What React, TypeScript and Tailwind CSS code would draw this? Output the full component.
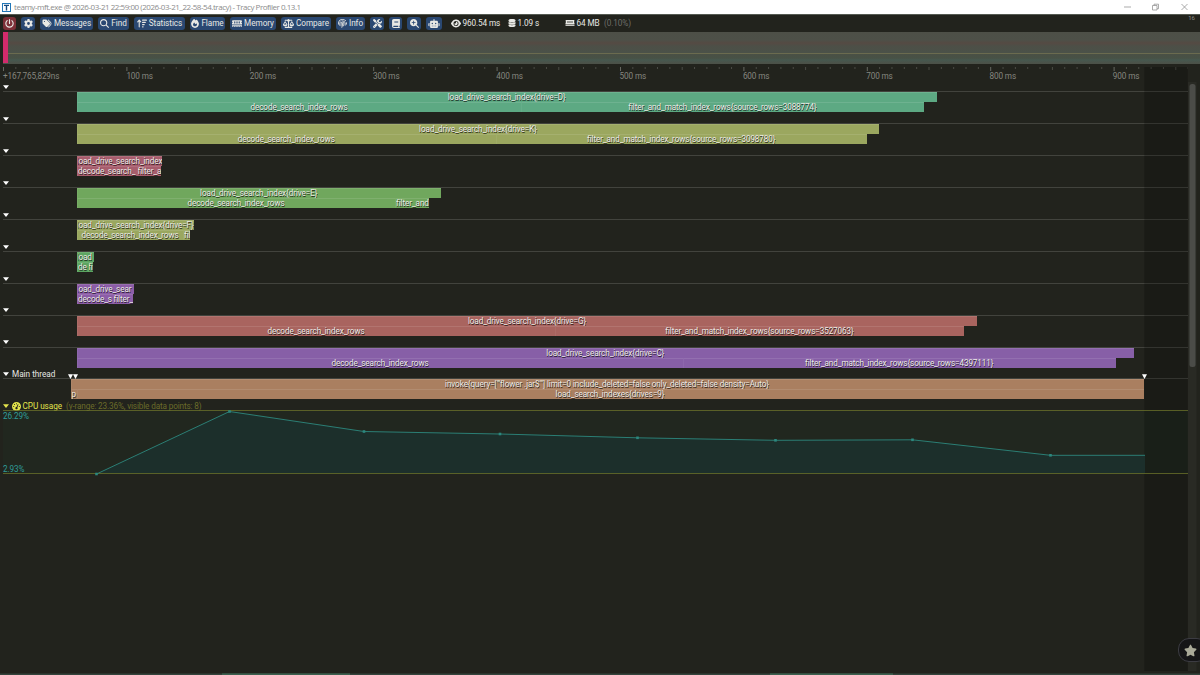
import {
  FaPowerOff, FaGear, FaTags, FaMagnifyingGlass, FaArrowUpWideShort, FaFire, FaMemory,
  FaScaleBalanced, FaFingerprint, FaScrewdriverWrench, FaBook, FaMagnifyingGlassPlus,
  FaRobot, FaEye, FaDatabase, FaStar, FaGaugeHigh,
} from "react-icons/fa6";

type Zone = { start: number; end: number; label: string; pad?: number };
type Track = { color: string; rows: Zone[][] };

const ORIGIN = 77;

const buttons = [
  { icon: FaPowerOff, label: "", box: "w-[13px] ml-[3px] bg-[#7c2f37]", size: "w-[9px]" },
  { icon: FaGear, label: "", box: "w-[14px] ml-[5px] bg-[#2a4872]", size: "w-[9px]" },
  { icon: FaTags, label: "Messages", box: "w-[53px] ml-[5px] bg-[#2a4872]", size: "w-[10px]" },
  { icon: FaMagnifyingGlass, label: "Find", box: "w-[31px] ml-[5px] bg-[#2a4872]", size: "w-[9px]" },
  { icon: FaArrowUpWideShort, label: "Statistics", box: "w-[51px] ml-[5px] bg-[#2a4872]", size: "w-[10px]" },
  { icon: FaFire, label: "Flame", box: "w-[35px] ml-[5px] bg-[#2a4872]", size: "w-[8px]" },
  { icon: FaMemory, label: "Memory", box: "w-[46px] ml-[5px] bg-[#2a4872]", size: "w-[10px]" },
  { icon: FaScaleBalanced, label: "Compare", box: "w-[50px] ml-[5px] bg-[#2a4872]", size: "w-[11px]" },
  { icon: FaFingerprint, label: "Info", box: "w-[29px] ml-[5px] bg-[#2a4872]", size: "w-[9px]" },
  { icon: FaScrewdriverWrench, label: "", box: "w-[14px] ml-[5px] bg-[#2a4872]", size: "w-[9px]" },
  { icon: FaBook, label: "", box: "w-[13px] ml-[5px] bg-[#2a4872]", size: "w-[8px]" },
  { icon: FaMagnifyingGlassPlus, label: "", box: "w-[14px] ml-[5px] bg-[#2a4872]", size: "w-[9px]" },
  { icon: FaRobot, label: "", box: "w-[16px] ml-[5px] bg-[#2a4872]", size: "w-[12px]" },
];

const tracks: Track[] = [
  {
    color: "bg-[#5da983]",
    rows: [
      [{ start: ORIGIN, end: 936.5, label: "load_drive_search_index{drive=D}" }],
      [
        { start: ORIGIN, end: 521, label: "decode_search_index_rows" },
        { start: 521, end: 924, label: "filter_and_match_index_rows{source_rows=3088774}" },
      ],
    ],
  },
  {
    color: "bg-[#9ba75f]",
    rows: [
      [{ start: ORIGIN, end: 879, label: "load_drive_search_index{drive=K}" }],
      [
        { start: ORIGIN, end: 495.5, label: "decode_search_index_rows" },
        { start: 495.5, end: 867, label: "filter_and_match_index_rows{source_rows=3098780}" },
      ],
    ],
  },
  {
    color: "bg-[#a85d6d]",
    rows: [
      [{ start: ORIGIN, end: 162, label: "load_drive_search_index", pad: -1.5 }],
      [
        { start: ORIGIN, end: 136.5, label: "decode_search_", pad: 0 },
        { start: 136.5, end: 161, label: "filter_a", pad: 0 },
      ],
    ],
  },
  {
    color: "bg-[#70a75d]",
    rows: [
      [{ start: ORIGIN, end: 440.5, label: "load_drive_search_index{drive=E}" }],
      [
        { start: ORIGIN, end: 395, label: "decode_search_index_rows" },
        { start: 395, end: 429, label: "filter_and", pad: 0 },
      ],
    ],
  },
  {
    color: "bg-[#9aa75f]",
    rows: [
      [{ start: ORIGIN, end: 193.5, label: "load_drive_search_index{drive=F}", pad: -1.5 }],
      [
        { start: ORIGIN, end: 183, label: "decode_search_index_rows" },
        { start: 183, end: 190, label: "fil", pad: 0 },
      ],
    ],
  },
  {
    color: "bg-[#5da562]",
    rows: [
      [{ start: ORIGIN, end: 93.5, label: "load", pad: -1.5 }],
      [
        { start: ORIGIN, end: 87.5, label: "de", pad: 0 },
        { start: 87.5, end: 93, label: "fi", pad: -0.5 },
      ],
    ],
  },
  {
    color: "bg-[#8c5da7]",
    rows: [
      [{ start: ORIGIN, end: 133.5, label: "load_drive_sear", pad: -1.5 }],
      [
        { start: ORIGIN, end: 112.5, label: "decode_s", pad: 0 },
        { start: 112.5, end: 132.5, label: "filter_", pad: 0 },
      ],
    ],
  },
  {
    color: "bg-[#a9645f]",
    rows: [
      [{ start: ORIGIN, end: 977, label: "load_drive_search_index{drive=G}" }],
      [
        { start: ORIGIN, end: 555, label: "decode_search_index_rows" },
        { start: 555, end: 964, label: "filter_and_match_index_rows{source_rows=3527063}" },
      ],
    ],
  },
  {
    color: "bg-[#875fa7]",
    rows: [
      [{ start: ORIGIN, end: 1133.5, label: "load_drive_search_index{drive=C}" }],
      [
        { start: ORIGIN, end: 683, label: "decode_search_index_rows" },
        { start: 683, end: 1115.5, label: "filter_and_match_index_rows{source_rows=4397111}" },
      ],
    ],
  },
];

const mainTrack: Track = {
  color: "bg-[#aa7f60]",
  rows: [
    [{ start: 70.5, end: 1143.5, label: "invoke{query=[\"'flower .jar$'\"] limit=0 include_deleted=false only_deleted=false density=Auto}" }],
    [
      { start: 70.5, end: 76.5, label: "p", pad: 0 },
      { start: 76.5, end: 1143.5, label: "load_search_indexes{drives=9}" },
    ],
  ],
};

const ticks = Array.from({ length: 97 }, (_, i) => i);

const points = [
  [96.5, 474], [229.5, 411.5], [364, 431.5], [500, 434], [637.5, 437.8],
  [775.5, 440.3], [912.5, 439.8], [1050.5, 455.3],
];

const linePath = "M" + points.map(([x, y]) => `${x} ${y}`).join("L") + "H1145";

const Triangle = ({ className = "fill-white" }: { className?: string }) => (
  <svg className={`w-[6px] h-[4px] shrink-0 ${className}`} viewBox="0 0 6 4">
    <path d="M0 0.3H6L3 3.9Z" />
  </svg>
);

const ZoneRow = ({ zones, color }: { zones: Zone[]; color: string }) => (
  <div className="flex h-[10px]">
    {zones.map((zone, i) => (
      <div
        key={i}
        className={`h-[10px] shrink-0 overflow-hidden whitespace-nowrap border-l border-t border-l-white/5 border-t-white/10 pr-px text-[8.2px] leading-[9px] tracking-[-0.11px] text-[#ecece8] [text-shadow:0.5px_0.5px_0.5px_rgba(0,0,0,0.75)] ${color} ${zone.pad === undefined ? "text-center" : ""}`}
        style={{
          width: zone.end - zone.start,
          marginLeft: i === 0 ? zone.start : 0,
          textIndent: zone.pad,
        }}
      >
        {zone.label}
      </div>
    ))}
  </div>
);

const TrackView = ({ track, name }: { track: Track; name?: string }) => (
  <div className="h-[31.9px]">
    <div className="flex h-[9.3px] items-center pl-[3px] pt-px">
      <Triangle />
      {name && <span className="ml-[3px] text-[8.2px] leading-[8px] text-[#e8e8e4]">{name}</span>}
    </div>
    <div className="ml-[3px] h-px w-[1185px] bg-[#42433d]" />
    <div>
      {track.rows.map((row, i) => (
        <ZoneRow key={i} zones={row} color={track.color} />
      ))}
    </div>
  </div>
);

const App = () => {
  return (
    <div className="relative flex h-[675px] w-[1200px] flex-col overflow-hidden bg-[#22231d] font-[Roboto,sans-serif] text-[8.2px] text-[#e8e8e4]">
      {/* window title */}
      <div className="flex h-[14px] shrink-0 items-center bg-white pl-[2px] font-['Open_Sans',sans-serif] text-[8px] tracking-[-0.46px] text-[#8c8c8c]">
        <svg className="h-[9px] w-[9px]" viewBox="0 0 9 9">
          <rect x="0.5" y="0.5" width="8" height="8" fill="#fff" stroke="#2277b8" />
          <path d="M2 2.4H7M4.5 2.4V7.4" stroke="#164a80" strokeWidth="1.4" />
        </svg>
        <span className="ml-[3px]">teamy-mft.exe @ 2026-03-21 22:59:00 (2026-03-21_22-58-54.tracy) - Tracy Profiler 0.13.1</span>
        <svg className="ml-auto mr-[11px] h-[8px] w-[66px] fill-none stroke-[#888]" viewBox="0 0 66 8" strokeWidth="0.7">
          <path d="M1 4H8M29.5 2.5h4.5v4.5h-4.5zM31 2.5v-1.3h4.5v4.5H34M58.5 1l6 6M64.5 1l-6 6" />
        </svg>
      </div>

      {/* toolbar */}
      <div className="flex h-[18px] shrink-0 items-center border-t border-[#555a52]">
        {buttons.map(({ icon: Icon, label, box, size }, i) => (
          <button key={i} className={`flex h-[13px] shrink-0 items-center justify-center gap-[2px] rounded-[3px] leading-none ${box}`}>
            <Icon className={`h-[9px] shrink-0 ${size}`} />
            {label && <span className="tracking-[-0.05px]">{label}</span>}
          </button>
        ))}
        <div className="flex items-center tracking-[-0.1px]">
          <FaEye className="ml-[9px] h-[9px] w-[10px]" />
          <span className="ml-[1.5px] w-[37px] whitespace-nowrap">960.54 ms</span>
          <FaDatabase className="ml-[8px] h-[8px] w-[8px]" />
          <span className="ml-[2px] w-[22px] whitespace-nowrap">1.09 s</span>
          <FaMemory className="ml-[25px] h-[8px] w-[10px]" />
          <span className="ml-[2px] w-[23px] whitespace-nowrap">64 MB</span>
          <span className="ml-[4.5px] text-[#6e6f69]">(0.10%)</span>
        </div>
        <span className="mb-[13px] ml-auto mr-[5px] text-[6px] text-[#8a8b85]">16</span>
      </div>

      {/* frame overview */}
      <div className="ml-[3px] h-[32px] w-[1197px] shrink-0 bg-[linear-gradient(#4d4f47_0px,#4d5048_8px,#554a43_11px,#4d4f47_14px,#4b5148_20px,#4b5148_21px,#6b6b4f_21px,#6b6b4f_22px,#4a5045_22px,#485145_26px,#46584f_28px,#4b5148_31px)]">
        <div className="h-[31px] w-[5px] bg-[#d32b6c]" />
      </div>

      {/* time scale */}
      <div className="h-[19px] shrink-0">
        <svg className="block h-[7px] w-[1188px]" viewBox="0 0 1188 7">
          {ticks.map((i) => (
            <path
              key={i}
              d={`M${3.5 + i * 12.34} 3V${i % 10 === 0 ? 7 : i % 5 === 0 ? 6 : 5}`}
              stroke={i % 10 === 0 ? "#85867f" : "#5d5e57"}
              strokeWidth="0.7"
            />
          ))}
        </svg>
        <div className="flex pl-[3px] leading-[10px] tracking-[-0.12px] text-[#85867f]">
          <span className="w-[123.4px] shrink-0">+167,765,829ns</span>
          {[100, 200, 300, 400, 500, 600, 700, 800, 900].map((ms) => (
            <span key={ms} className="w-[123.3px] shrink-0">{ms} ms</span>
          ))}
        </div>
      </div>

      {/* thread tracks */}
      <div className="-mt-[0.9px]">
        {tracks.map((track, i) => (
          <TrackView key={i} track={track} />
        ))}
        <TrackView track={mainTrack} name="Main thread" />
      </div>

      {/* plot header */}
      <div className="flex h-[10px] items-center pl-[3px] leading-[10px] text-[#e3e34c]">
        <Triangle className="fill-[#e3e34c]" />
        <FaGaugeHigh className="ml-[3px] h-[9px] w-[9px]" />
        <span className="ml-[1.5px] tracking-[-0.05px]">CPU usage</span>
        <span className="ml-[4px] tracking-[-0.14px] text-[#6b6c2a]">(y-range: 23.36%, visible data points: 8)</span>
      </div>

      {/* plot, shade past the end of the capture, scrollbar */}
      <svg className="pointer-events-none absolute left-0 top-0 h-[675px] w-[1200px]" viewBox="0 0 1200 675">
        <rect x="1144.3" y="67" width="43.5" height="604" fill="#000" opacity="0.22" />
        <rect x="3" y="411" width="1185" height="62.5" fill="#00ffaa" opacity="0.02" />
        <path d={`${linePath}V473.5H96.5Z`} fill="#1c2f2b" />
        <path d="M3 410.5H1188M3 473.5H1188" stroke="#68702a" strokeWidth="0.8" />
        <path d={linePath} fill="none" stroke="#2c887e" strokeWidth="0.9" />
        {points.map(([x, y]) => (
          <rect key={x} x={x - 1.3} y={y - 1.3} width="2.6" height="2.6" fill="#2c887e" />
        ))}
        <path d="M68 374.3H73L70.5 379ZM73 374.3H78L75.5 379ZM1142 374.3H1147L1144.5 379Z" fill="#fff" />
        <rect x="1188" y="82" width="8.5" height="589" fill="#292a24" />
        <rect x="1189.5" y="84" width="6" height="283" rx="2.5" fill="#4b4c48" />
        <path d="M0 674.2H1200" stroke="#34443c" strokeWidth="1.4" />
        <path d="M222 674.2H350M770 674.2H893" stroke="#3f6a55" strokeWidth="1.2" />
      </svg>
      <span className="absolute left-[3px] top-[412px] leading-[9px] tracking-[-0.1px] text-[#2f9c98]">26.29%</span>
      <span className="absolute left-[3px] top-[465px] leading-[9px] tracking-[-0.1px] text-[#2f9c98]">2.93%</span>
      <div className="absolute left-[1178px] top-[638px] flex h-[24px] w-[30px] items-center rounded-[11px] border border-[#3c3c42] bg-[#151517] pl-[5px]">
        <FaStar className="h-[13px] w-[13px] text-[#a9a998]" />
      </div>
    </div>
  );
};

export default App;
